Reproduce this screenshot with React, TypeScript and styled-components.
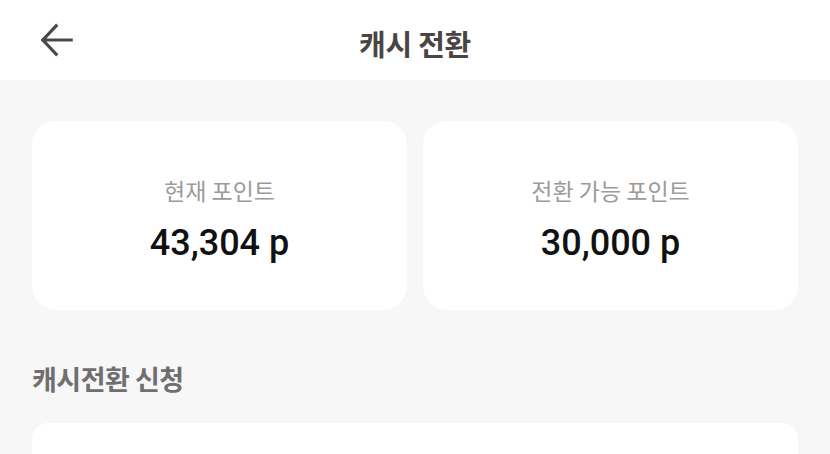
import styled, { createGlobalStyle } from "styled-components";

const GlobalStyle = createGlobalStyle`
  html, body {
    margin: 0;
    padding: 0;
    background: #f7f7f7;
    font-family: "Noto Sans CJK KR", "Noto Sans", sans-serif;
  }
`;

const Page = styled.div`
  width: 830px;
  min-height: 454px;
  overflow: hidden;
`;

const Header = styled.header`
  height: 80px;
  background: #fff;
  display: flex;
  align-items: center;
  justify-content: center;
  position: relative;
`;

const BackButton = styled.button`
  position: absolute;
  left: 36px;
  top: 19px;
  width: 42px;
  height: 42px;
  padding: 0;
  border: none;
  background: none;
  display: flex;
  align-items: center;
  justify-content: center;
  color: #4d4848;
`;

const Title = styled.h1`
  margin: 6px 0 0;
  font-size: 29px;
  font-weight: 700;
  color: #4a4444;
  letter-spacing: -0.3px;
`;

const Content = styled.main`
  padding: 41px 32px 0;
`;

const PointGrid = styled.section`
  display: grid;
  grid-template-columns: 1fr 1fr;
  gap: 16px;
`;

const PointCard = styled.div`
  height: 189px;
  background: #fff;
  border-radius: 24px;
  display: flex;
  flex-direction: column;
  align-items: center;
  justify-content: center;
  gap: 16px;
  padding-top: 8px;
  box-sizing: border-box;
`;

const PointLabel = styled.span`
  font-size: 23px;
  color: #9b9b9b;
  line-height: 1.4;
`;

const PointValue = styled.span`
  font-family: Roboto, "Noto Sans", sans-serif;
  font-size: 36px;
  font-weight: 500;
  color: #111;
  line-height: 1.2;
`;

const SectionTitle = styled.h2`
  margin: 50px 0 0;
  font-size: 27px;
  font-weight: 700;
  color: #6f6f6f;
  line-height: 1.4;
  letter-spacing: -0.5px;
`;

const FormCard = styled.div`
  margin-top: 25px;
  height: 200px;
  background: #fff;
  border-radius: 16px;
`;

function ArrowBack() {
  return (
    <svg width="40" height="40" viewBox="0 0 24 24" fill="none">
      <path
        d="M20.5 12H3.5M11.5 3.5 3.5 12l8 8.5"
        stroke="currentColor"
        strokeWidth="1.9"
        strokeLinecap="square"
      />
    </svg>
  );
}

const points = [
  { label: "현재 포인트", value: "43,304 p" },
  { label: "전환 가능 포인트", value: "30,000 p" },
];

export default function App() {
  return (
    <Page>
      <GlobalStyle />
      <Header>
        <BackButton aria-label="뒤로">
          <ArrowBack />
        </BackButton>
        <Title>캐시 전환</Title>
      </Header>
      <Content>
        <PointGrid>
          {points.map((p) => (
            <PointCard key={p.label}>
              <PointLabel>{p.label}</PointLabel>
              <PointValue>{p.value}</PointValue>
            </PointCard>
          ))}
        </PointGrid>
        <SectionTitle>캐시전환 신청</SectionTitle>
        <FormCard />
      </Content>
    </Page>
  );
}
